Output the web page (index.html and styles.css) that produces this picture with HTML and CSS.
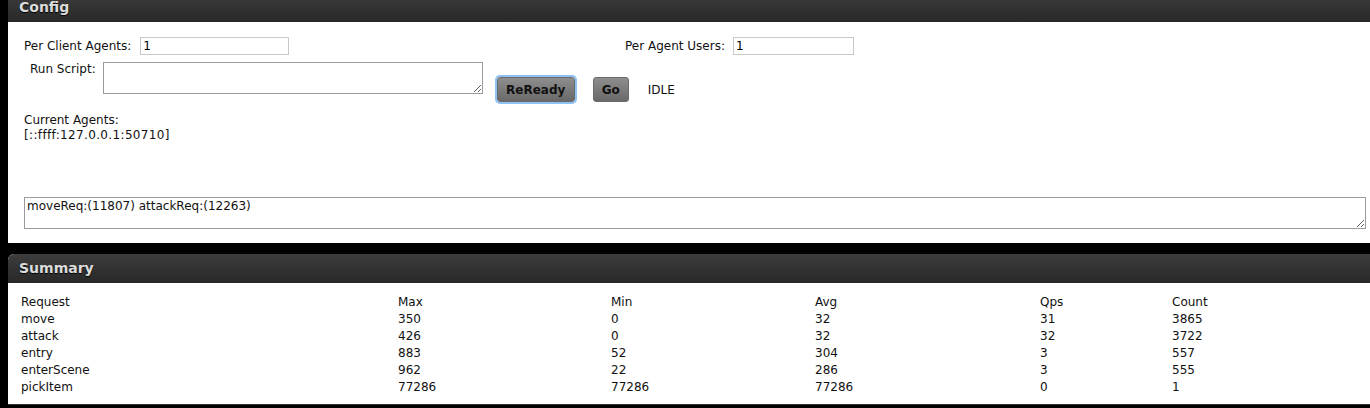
FILE: index.html
```html
<!DOCTYPE html>
<html>
<head>
<meta charset="utf-8">
<link rel="stylesheet" href="styles.css">
</head>
<body>
<div class="panel panel-config">
  <div class="panel-head">Config</div>
  <div class="panel-body config-body">
    <div class="row row-top">
      <div class="field"><span class="lbl">Per Client Agents:</span><input class="txt txt-client" type="text" value="1"></div>
      <div class="field"><span class="lbl">Per Agent Users:</span><input class="txt txt-users" type="text" value="1"></div>
    </div>
    <div class="row row-script">
      <span class="lbl lbl-script">Run Script:</span>
      <textarea class="script-area"></textarea>
      <button class="btn btn-focus">ReReady</button>
      <button class="btn btn-go">Go</button>
      <span class="state">IDLE</span>
    </div>
    <div class="agents">
      <div>Current Agents:</div>
      <div class="addr">[::ffff:127.0.0.1:50710]</div>
    </div>
    <textarea class="log-area">moveReq:(11807) attackReq:(12263)</textarea>
  </div>
</div>
<div class="panel panel-summary">
  <div class="panel-head">Summary</div>
  <div class="panel-body summary-body">
    <div class="grid">
      <div>Request</div><div>Max</div><div>Min</div><div>Avg</div><div>Qps</div><div>Count</div>
      <div>move</div><div>350</div><div>0</div><div>32</div><div>31</div><div>3865</div>
      <div>attack</div><div>426</div><div>0</div><div>32</div><div>32</div><div>3722</div>
      <div>entry</div><div>883</div><div>52</div><div>304</div><div>3</div><div>557</div>
      <div>enterScene</div><div>962</div><div>22</div><div>286</div><div>3</div><div>555</div>
      <div>pickItem</div><div>77286</div><div>77286</div><div>77286</div><div>0</div><div>1</div>
    </div>
  </div>
</div>
</body>
</html>
```

FILE: styles.css
```css
html, body {
  margin: 0;
  padding: 0;
  background: #000;
  height: 408px;
  overflow: hidden;
}
body {
  padding-left: 8px;
  font-family: "DejaVu Sans", Verdana, sans-serif;
  font-size: 12px;
  color: #111;
}
.panel {
  background: #fff;
}
.panel-config {
  margin-top: -7px;
}
.panel-summary {
  margin-top: 11px;
  border-top-left-radius: 6px;
  overflow: hidden;
}
.panel-head {
  height: 29px;
  line-height: 29px;
  padding-left: 11px;
  background: linear-gradient(#3d3d3d, #282828);
  color: #dcdcdc;
  font-weight: bold;
  font-size: 14px;
  text-shadow: 0 1px 1px #000;
}
.panel-config .panel-head {
  border-top-left-radius: 6px;
}
.config-body {
  padding: 15px 4px 14px 16px;
}
.row {
  display: flex;
  align-items: flex-start;
}
.row-top {
  display: grid;
  grid-template-columns: 601px auto;
  align-items: center;
}
.field {
  display: flex;
  align-items: center;
}
.lbl {
  line-height: 15px;
  margin-right: 8px;
}
.txt {
  box-sizing: border-box;
  height: 18px;
  border: 1px solid #c8c8c8;
  font-family: "DejaVu Sans", Verdana, sans-serif;
  font-size: 12px;
  padding: 0 2px;
  margin: 0;
  color: #000;
}
.txt-client { width: 149px; margin-left: 1px; }
.txt-users { width: 121px; }
.row-script {
  margin-top: 7px;
}
.lbl-script {
  margin-left: 6px;
  margin-right: 7px;
}
.script-area {
  box-sizing: border-box;
  width: 380px;
  height: 32px;
  border: 1px solid #9a9a9a;
  margin: 0;
  padding: 2px;
  font-family: "DejaVu Sans", Verdana, sans-serif;
  font-size: 12px;
}
.btn {
  box-sizing: border-box;
  height: 25px;
  margin-top: 15px;
  border: 1px solid #6a6a6a;
  border-radius: 3px;
  background: linear-gradient(#8e8e8e, #696969);
  color: #111;
  font-family: "DejaVu Sans", Verdana, sans-serif;
  font-weight: bold;
  font-size: 12px;
  padding: 0;
}
.btn-focus {
  width: 78px;
  margin-left: 14px;
  box-shadow: 0 0 0 2px #8ec2f5;
}
.btn-go {
  width: 36px;
  margin-left: 18px;
}
.state {
  margin-top: 21px;
  margin-left: 19px;
  line-height: 15px;
}
.agents {
  margin-top: 11px;
  line-height: 15px;
}
.addr {
  letter-spacing: 0.35px;
}
.log-area {
  display: block;
  box-sizing: border-box;
  width: 1342px;
  height: 32px;
  margin: 54px 0 0 0;
  border: 1px solid #9a9a9a;
  padding: 1px 2px;
  font-family: "DejaVu Sans", Verdana, sans-serif;
  font-size: 12px;
  color: #111;
  resize: both;
}
.summary-body {
  padding: 11px 0 8px 13px;
  border-bottom: 1px solid #333;
}
.grid {
  display: grid;
  grid-template-columns: 377px 213px 204px 225px 132px auto;
  grid-auto-rows: 17px;
  line-height: 17px;
}
```
